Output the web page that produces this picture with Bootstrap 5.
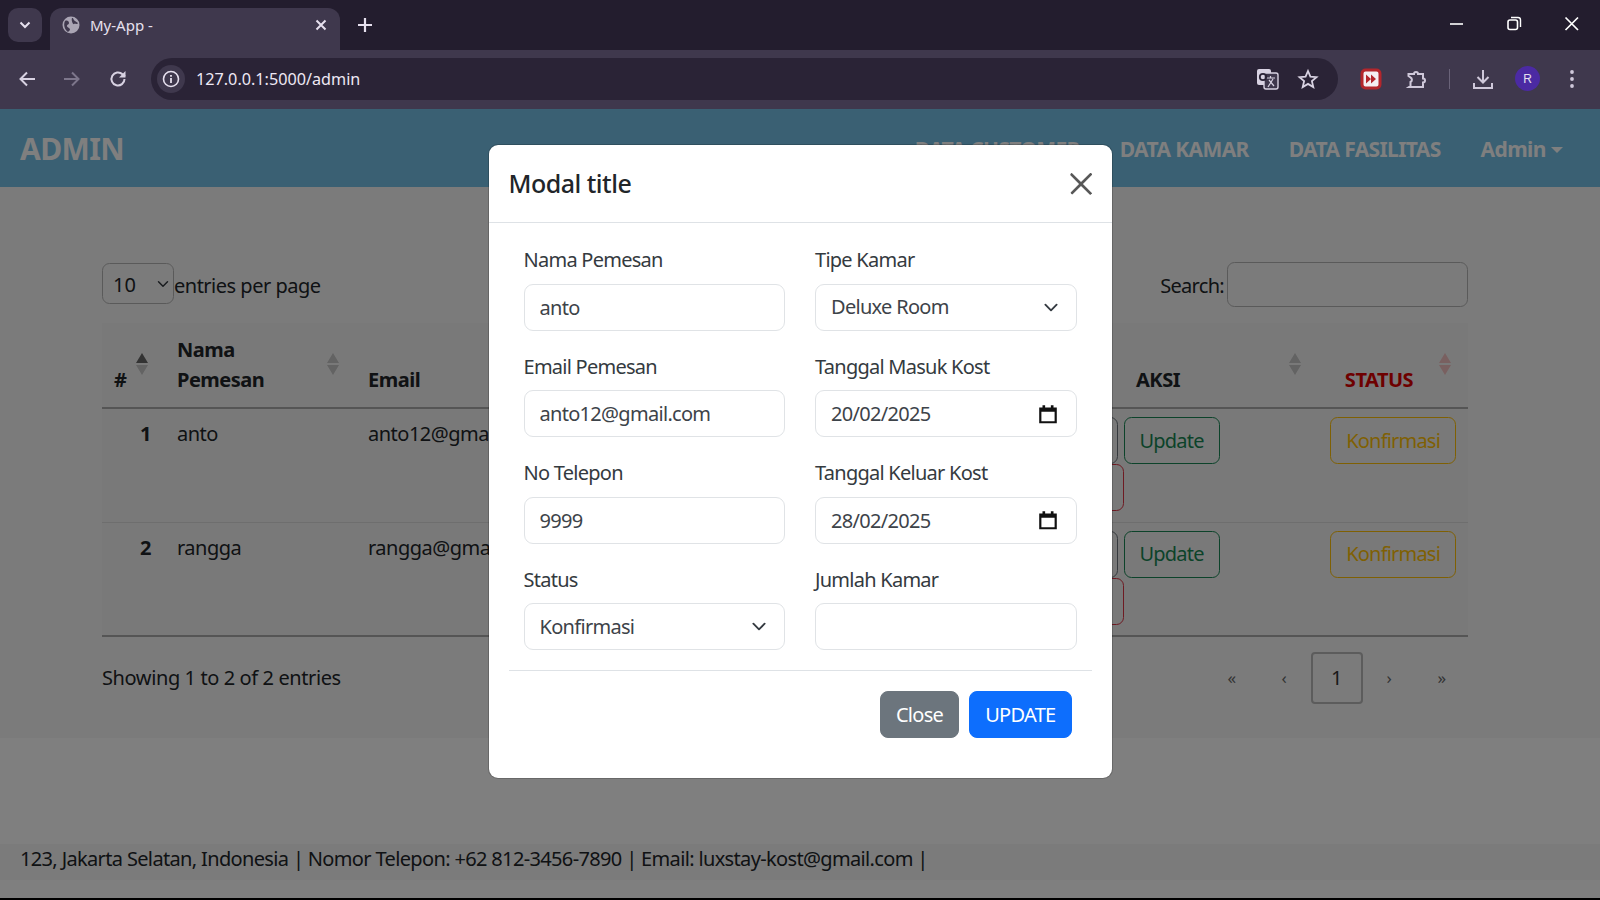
<!DOCTYPE html>
<html lang="id">
<head>
<meta charset="utf-8">
<title>My-App -</title>
<link rel="stylesheet" href="https://cdn.jsdelivr.net/npm/bootstrap@5.3.0/dist/css/bootstrap.min.css">
<style>
html{font-size:20px}
body{font-family:"Noto Sans",sans-serif;letter-spacing:-.025em;height:900px;overflow:hidden;background:#000;color:#212529}
.shell{height:898px}
.tabstrip{height:50px;background:#231d2e;color:#e6e0ee;padding:8px 0 0 8px}
.tab-menu{width:34px;height:34px;border-radius:10px;background:#3f384d}
.tab-cur{width:290px;height:42px;margin-left:8px;background:#3f384d;border-radius:12px 12px 0 0;padding:0 12px 8px;font:15px "Noto Sans",sans-serif;letter-spacing:0}
.tab-label{margin-right:-5px}
.tab-plus{margin:7px 0 0 15px}
.win-btns{gap:37.6px;padding-right:18px}
.toolbar{height:59px;background:#3f384d;padding:0 14px 2px 16px;color:#cfc8da}
.omni{height:42px;width:1187px;background:#2a2336;border-radius:21px;padding:0 19px 0 6px;margin-left:22px;color:#eee8f4;font:16.2px "Noto Sans",sans-serif;letter-spacing:0}
.info-dot{width:28px;height:28px;border-radius:50%;background:#3f384d}
.url-text{margin-left:11px}
.ml-17{margin-left:17px}.ml-20{margin-left:20px}.ml-21{margin-left:21px}.ml-22{margin-left:22px}.ml-23{margin-left:23px}.ml-24{margin-left:24px}
.avatar{width:25px;height:25px;border-radius:50%;background:#4b2aa3;color:#e6e0ee;font:12px "Liberation Sans",sans-serif;letter-spacing:0}
.tool-sep{width:1px;height:20px;background:#6a6379}
.page-area{height:789px;background:#fff;position:relative;overflow:hidden}
.top-nav{height:78px;background:#74c0e6;padding:4px 20px 0}
.top-brand{font-size:30px;font-weight:700;color:#fff;letter-spacing:-.02em;margin-top:-4px}
.top-links{gap:40px;margin-right:17px}
.top-link{font-size:21px;font-weight:700;color:#fff;letter-spacing:-.03em;text-decoration:none}
.top-link.dropdown-toggle::after{vertical-align:.18em}
.main-band{height:551px;background:#f7f7f7;padding:75px 132px 0 102px}
.table-top{height:61px}
.side-text{line-height:48px}
.search-label{letter-spacing:-.035em;margin-right:3px}
.len-select{width:72px;height:41px;margin-top:1px;padding:2px 0 0 10px;font-size:20px;background-color:transparent;background-position:right 2px center;background-size:16px 12px;border-color:#b5b5b5}
.search-box{width:241px;height:45px;background:transparent;border-color:#b5b5b5}
.data-table{table-layout:fixed;width:1366px;margin:0;--bs-table-bg:#f3f3f3}
.data-table>thead>tr>th{vertical-align:bottom;padding:10px 40px 12px 12px;position:relative;border-bottom:2px solid #aaa;line-height:30px;height:85px}
.data-table>thead>tr>th.aksi-head{padding-left:24px}
.data-table>tbody>tr>td,.data-table>tbody>tr>th{padding:10px 12px;height:114px;vertical-align:top;border-bottom:1px solid #ddd;line-height:30px}
.data-table>tbody>tr>th{padding-right:14px}
.data-table>tbody>tr>td.btn-cell{padding-top:8px}
.data-table>tbody>tr>td.aksi-cell{padding-left:22px}
.data-table>tbody>tr:last-child>*{border-bottom:2px solid #aaa}
.data-table .btn{letter-spacing:-.04em}
.sort-mark::before,.sort-mark::after{content:"";position:absolute;right:17px;border-left:6.500px solid transparent;border-right:6.500px solid transparent}
.sort-mark::before{top:30px;border-bottom:10px solid #c6c6c6}
.sort-mark::after{top:41.500px;border-top:10px solid #c6c6c6}
.sort-asc::before{border-bottom-color:#666}
.sort-red::before{border-bottom-color:#f2c0c0}
.sort-red::after{border-top-color:#f2c0c0}
.status-head{color:#d00}
.aksi-cell .btn{padding:7.500px 15px;margin-right:1px}
.table-foot{height:78px;padding-top:3px;letter-spacing:-.02em}
.pager-item{width:52.500px;height:52px;color:#666;font-size:17px;letter-spacing:0}
.pager-cur{border:2px solid #b8b8b8;border-radius:4px;color:#333;font-size:20px;background:#f6f6f6}
.foot-gap{height:106px}
.foot-band{height:36px;background:#f6f6f6;padding:0 20px;line-height:30px;letter-spacing:-.0325em}
.foot-rest{height:18px}
.modal.modal-wrap{position:absolute;height:100%;--bs-modal-width:625px}
.modal-backdrop.dim{position:absolute;width:100%;height:100%;top:0;left:0}
.modal-wrap .modal-dialog{margin-top:35px}
.modal-wrap .modal-header{height:78px;padding:0 20px}
.modal-wrap .modal-title{font-size:25px;font-weight:500;line-height:1;letter-spacing:-.02em}
.modal-wrap .btn-close{width:25px;height:25px;padding:0;margin:0 -2px 0 0;background-size:22px;opacity:.65}
.modal-wrap .modal-body{padding:22px 20px 40px}
.field-box{margin-bottom:21.100px}
.modal-wrap .form-label{margin-bottom:8.500px;line-height:30px;color:#343a40;display:block;letter-spacing:-.037em}
.modal-wrap .form-control,.modal-wrap .form-select{height:47px;border-color:#e0e3e6;color:#3d4349;border-radius:9px;letter-spacing:-.035em}
.modal-wrap .form-select{background-size:20px 15px;background-position:right 15px center}
.date-field{background-image:url("data:image/svg+xml,%3Csvg xmlns='http://www.w3.org/2000/svg' viewBox='0 0 20 20'%3E%3Cpath d='M3 5h14v12.500H3z' fill='none' stroke='%23111' stroke-width='2'/%3E%3Cpath d='M3 4.500h14v3.500H3zM5 2h2.400v3H5zM12.600 2H15v3h-2.400z' fill='%23111'/%3E%3C/svg%3E");background-repeat:no-repeat;background-position:right 17px center;background-size:22px 22px}
.form-line{border-top:1px solid #dee2e6;padding-top:20px;margin-top:-1px;gap:10px;padding-right:20px}
.form-line .btn{height:46.500px;padding:0 15px;border-radius:8px;letter-spacing:-.035em}
.win-ic{display:block}
</style>
</head>
<body>
<div class="shell">
  <div class="tabstrip d-flex">
    <div class="tab-menu d-flex align-items-center justify-content-center">
      <svg width="14" height="14" viewBox="0 0 14 14"><path d="M2.500 4.500 7 9l4.500-4.500" fill="none" stroke="#e6e0ee" stroke-width="2"/></svg>
    </div>
    <div class="tab-cur d-flex align-items-center gap-2">
      <svg width="18" height="18" viewBox="0 0 18 18"><circle cx="9" cy="9" r="8.500" fill="#aaa5b4"/><path d="M3 5c2-1 4 0 4 2s-2 1-2 3 3 1 3 4l-2 2C3 14 1 9 3 5zM10 2c2 0 1 2 3 3l3 2c-1 2-3 0-4 1S9 4 10 2z" fill="#3f384d"/></svg>
      <span class="tab-label flex-grow-1">My-App -</span>
      <svg width="14" height="14" viewBox="0 0 14 14"><path d="M2.500 2.500l9 9M11.500 2.500l-9 9" stroke="#e6e0ee" stroke-width="2"/></svg>
    </div>
    <svg class="tab-plus" width="20" height="20" viewBox="0 0 20 20"><path d="M10 3v14M3 10h14" stroke="#e6e0ee" stroke-width="2.200"/></svg>
    <div class="win-btns d-flex align-items-center ms-auto pb-2">
      <svg class="win-ic" width="20" height="20" viewBox="0 0 20 20"><path d="M3 10h13" stroke="#fff" stroke-width="1.600"/></svg>
      <svg class="win-ic" width="20" height="20" viewBox="0 0 20 20"><rect x="4" y="6" width="9.500" height="9.500" rx="2" fill="none" stroke="#fff" stroke-width="1.600"/><path d="M7 3.500h7a2.500 2.500 0 0 1 2.500 2.500v7" fill="none" stroke="#fff" stroke-width="1.400"/></svg>
      <svg class="win-ic" width="20" height="20" viewBox="0 0 20 20"><path d="M3.500 3.500l12.500 12.500M16 3.500 3.500 16" stroke="#fff" stroke-width="1.700"/></svg>
    </div>
  </div>
  <div class="toolbar d-flex align-items-center">
    <svg width="22" height="22" viewBox="0 0 22 22"><path d="M19 11H5M11 4.500 4.500 11l6.500 6.500" fill="none" stroke="#d8d2e2" stroke-width="2"/></svg>
    <svg class="ml-23" width="22" height="22" viewBox="0 0 22 22"><path d="M3 11h14M11 4.500l6.500 6.500-6.500 6.500" fill="none" stroke="#7d768b" stroke-width="2"/></svg>
    <svg class="ml-24" width="22" height="22" viewBox="0 0 22 22"><path d="M17.500 11a6.500 6.500 0 1 1-2-4.700L18 8.500" fill="none" stroke="#d8d2e2" stroke-width="2"/><path d="M18.500 3v6.500H12z" fill="#d8d2e2"/></svg>
    <div class="omni d-flex align-items-center">
      <div class="info-dot d-flex align-items-center justify-content-center">
        <svg width="18" height="18" viewBox="0 0 18 18"><circle cx="9" cy="9" r="7.500" fill="none" stroke="#e6e0ee" stroke-width="1.600"/><path d="M9 8v5M9 5v1.800" stroke="#e6e0ee" stroke-width="1.800"/></svg>
      </div>
      <span class="url-text flex-grow-1">127.0.0.1:5000/admin</span>
      <svg width="24" height="24" viewBox="0 0 24 24"><rect x="1" y="2" width="14" height="16" rx="2" fill="#d8d2e2"/><rect x="8" y="6" width="14" height="16" rx="2" fill="#3f384d" stroke="#d8d2e2" stroke-width="1.400"/><path d="M10 11h9M14.500 9v2M12 20l5-8M13 13l5 6" stroke="#d8d2e2" stroke-width="1.200" fill="none"/><circle cx="7" cy="10" r="3.200" fill="none" stroke="#2a2336" stroke-width="1.800"/></svg>
      <svg class="ml-17" width="22" height="22" viewBox="0 0 22 22"><path d="m11 3 2.400 5.600 6.100.5-4.600 4 1.400 6L11 15.900 5.700 19.100l1.400-6-4.600-4 6.100-.5z" fill="none" stroke="#d8d2e2" stroke-width="1.800"/></svg>
    </div>
    <svg class="ml-22" width="22" height="22" viewBox="0 0 22 22"><rect x="2" y="2" width="18" height="18" rx="3.500" fill="#f4eef2" stroke="#b3262c" stroke-width="3"/><path d="M6 6.500l5 4.500-5 4.500zM11 6.500l5 4.500-5 4.500z" fill="#b3262c"/></svg>
    <svg class="ml-23" width="24" height="24" viewBox="0 0 24 24"><path d="M3.500 7H9a2 2 0 0 1 4 0h5v4.500a2 2 0 0 1 0 4V20H4l1.500-1V15a2.500 2.500 0 0 0 0-4.500L3.500 9z" fill="none" stroke="#cfc8da" stroke-width="2"/></svg>
    <div class="tool-sep ml-20"></div>
    <svg class="ml-21" width="24" height="24" viewBox="0 0 24 24"><path d="M12 3v12M6.500 10l5.500 5.500 5.500-5.500M3 16v5h18v-5" fill="none" stroke="#cfc8da" stroke-width="2"/></svg>
    <div class="avatar d-flex align-items-center justify-content-center ml-20">R</div>
    <svg class="ml-24" width="16" height="22" viewBox="0 0 16 22"><circle cx="8" cy="4" r="1.900" fill="#cfc8da"/><circle cx="8" cy="11" r="1.900" fill="#cfc8da"/><circle cx="8" cy="18" r="1.900" fill="#cfc8da"/></svg>
  </div>

  <div class="page-area">
    <nav class="top-nav d-flex align-items-center justify-content-between">
      <a class="top-brand text-decoration-none" href="#">ADMIN</a>
      <div class="top-links d-flex align-items-center">
        <a class="top-link" href="#">DATA CUSTOMER</a>
        <a class="top-link" href="#">DATA KAMAR</a>
        <a class="top-link" href="#">DATA FASILITAS</a>
        <a class="top-link dropdown-toggle" href="#">Admin</a>
      </div>
    </nav>
    <div class="main-band">
      <div class="table-top d-flex justify-content-between">
        <div class="d-flex align-items-start">
          <select class="form-select len-select"><option>10</option></select>
          <span class="side-text">entries per page</span>
        </div>
        <div class="d-flex align-items-start">
          <span class="side-text search-label">Search:</span>
          <input class="form-control search-box" type="text">
        </div>
      </div>
      <table class="table data-table">
        <colgroup><col style="width:63px"><col style="width:191px"><col style="width:340px"><col style="width:318px"><col style="width:304px"><col style="width:150px"></colgroup>
        <thead>
          <tr>
            <th class="sort-mark sort-asc">#</th>
            <th class="sort-mark">Nama Pemesan</th>
            <th class="sort-mark">Email</th>
            <th class="sort-mark">Tipe Kamar</th>
            <th class="sort-mark aksi-head text-center">AKSI</th>
            <th class="sort-mark sort-red status-head text-center">STATUS</th>
          </tr>
        </thead>
        <tbody>
          <tr>
            <th class="text-end">1</th><td>anto</td><td>anto12@gmail.com</td><td>Deluxe Room</td>
            <td class="aksi-cell btn-cell"><button class="btn btn-outline-secondary">Detail</button> <button class="btn btn-outline-success">Update</button> <button class="btn btn-outline-danger">Delete</button></td>
            <td class="text-end btn-cell"><button class="btn btn-outline-warning">Konfirmasi</button></td>
          </tr>
          <tr>
            <th class="text-end">2</th><td>rangga</td><td>rangga@gmail.com</td><td>Deluxe Room</td>
            <td class="aksi-cell btn-cell"><button class="btn btn-outline-secondary">Detail</button> <button class="btn btn-outline-success">Update</button> <button class="btn btn-outline-danger">Delete</button></td>
            <td class="text-end btn-cell"><button class="btn btn-outline-warning">Konfirmasi</button></td>
          </tr>
        </tbody>
      </table>
      <div class="table-foot d-flex justify-content-between align-items-center">
        <span>Showing 1 to 2 of 2 entries</span>
        <div class="d-flex align-items-center">
          <span class="pager-item d-flex align-items-center justify-content-center">«</span>
          <span class="pager-item d-flex align-items-center justify-content-center">‹</span>
          <span class="pager-item pager-cur d-flex align-items-center justify-content-center">1</span>
          <span class="pager-item d-flex align-items-center justify-content-center">›</span>
          <span class="pager-item d-flex align-items-center justify-content-center">»</span>
        </div>
      </div>
    </div>
    <div class="foot-gap"></div>
    <div class="foot-band">123, Jakarta Selatan, Indonesia | Nomor Telepon: +62 812-3456-7890 | Email: luxstay-kost@gmail.com |</div>
    <div class="foot-rest"></div>

    <div class="modal-backdrop dim show"></div>
    <div class="modal d-block modal-wrap">
      <div class="modal-dialog">
        <div class="modal-content">
          <div class="modal-header">
            <h1 class="modal-title">Modal title</h1>
            <button type="button" class="btn-close ms-auto" aria-label="Close"></button>
          </div>
          <div class="modal-body">
            <form>
              <div class="row mx-0">
                <div class="col-6">
                  <div class="field-box"><label class="form-label">Nama Pemesan</label><input class="form-control" type="text" value="anto"></div>
                  <div class="field-box"><label class="form-label">Email Pemesan</label><input class="form-control" type="text" value="anto12@gmail.com"></div>
                  <div class="field-box"><label class="form-label">No Telepon</label><input class="form-control" type="text" value="9999"></div>
                  <div class="field-box"><label class="form-label">Status</label><select class="form-select"><option>Konfirmasi</option></select></div>
                </div>
                <div class="col-6">
                  <div class="field-box"><label class="form-label">Tipe Kamar</label><select class="form-select"><option>Deluxe Room</option></select></div>
                  <div class="field-box"><label class="form-label">Tanggal Masuk Kost</label><input class="form-control date-field" type="text" value="20/02/2025"></div>
                  <div class="field-box"><label class="form-label">Tanggal Keluar Kost</label><input class="form-control date-field" type="text" value="28/02/2025"></div>
                  <div class="field-box"><label class="form-label">Jumlah Kamar</label><input class="form-control" type="text"></div>
                </div>
              </div>
              <div class="form-line d-flex justify-content-end">
                <button type="button" class="btn btn-secondary">Close</button>
                <button type="button" class="btn btn-primary">UPDATE</button>
              </div>
            </form>
          </div>
        </div>
      </div>
    </div>
  </div>
</div>
</body>
</html>
